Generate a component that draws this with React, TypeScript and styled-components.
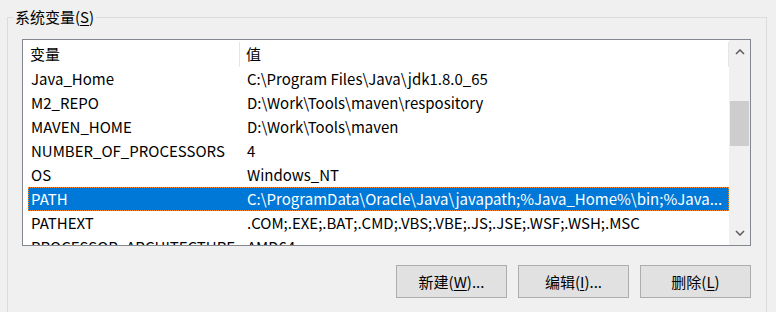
import styled, { createGlobalStyle } from "styled-components";

const GlobalStyle = createGlobalStyle`
  html, body {
    margin: 0;
    padding: 0;
    background: #f0f0f0;
  }
  body {
    font-family: "Noto Sans CJK SC", "Noto Sans", sans-serif;
    font-size: 15px;
    color: #000;
  }
`;

interface EnvVar {
  name: string;
  value: string;
}

const vars: EnvVar[] = [
  { name: "Java_Home", value: "C:\\Program Files\\Java\\jdk1.8.0_65" },
  { name: "M2_REPO", value: "D:\\Work\\Tools\\maven\\respository" },
  { name: "MAVEN_HOME", value: "D:\\Work\\Tools\\maven" },
  { name: "NUMBER_OF_PROCESSORS", value: "4" },
  { name: "OS", value: "Windows_NT" },
  {
    name: "PATH",
    value: "C:\\ProgramData\\Oracle\\Java\\javapath;%Java_Home%\\bin;%Java...",
  },
  { name: "PATHEXT", value: ".COM;.EXE;.BAT;.CMD;.VBS;.VBE;.JS;.JSE;.WSF;.WSH;.MSC" },
  { name: "PROCESSOR_ARCHITECTURE", value: "AMD64" },
];

const selectedName = "PATH";

const Chevron = ({ down }: { down?: boolean }) => (
  <svg width="10" height="6" viewBox="0 0 10 6">
    <path
      d={down ? "M1 1 L5 5 L9 1" : "M1 5 L5 1 L9 5"}
      fill="none"
      stroke="#606060"
      strokeWidth="1.6"
    />
  </svg>
);

const App = () => {
  return (
    <>
      <GlobalStyle />
      <GroupBox>
        <Legend>
          系统变量(<u>S</u>)
        </Legend>
        <ListBox>
          <ListArea>
            <Header>
              <HeaderCell $width={217}>变量</HeaderCell>
              <HeaderCell>值</HeaderCell>
            </Header>
            <Rows>
              {vars.map((v) => (
                <Row key={v.name} $selected={v.name === selectedName}>
                  <Cell>{v.name}</Cell>
                  <Cell>{v.value}</Cell>
                </Row>
              ))}
            </Rows>
          </ListArea>
          <ScrollBar>
            <ArrowButton>
              <Chevron />
            </ArrowButton>
            <Track>
              <Thumb $top={37} $height={45} />
            </Track>
            <ArrowButton>
              <Chevron down />
            </ArrowButton>
          </ScrollBar>
        </ListBox>
        <ButtonRow>
          <Button>
            新建(<u>W</u>)...
          </Button>
          <Button>
            编辑(<u>I</u>)...
          </Button>
          <Button>
            删除(<u>L</u>)
          </Button>
        </ButtonRow>
      </GroupBox>
    </>
  );
};
export default App;

const GroupBox = styled.fieldset`
  margin: 7px 9px 0 7px;
  padding: 0 15px 40px 14px;
  border: 1px solid #dcdcdc;
  min-width: 0;
`;

const Legend = styled.legend`
  margin-left: -9px;
  padding: 0 2px;
  line-height: 20px;
  font-size: 15px;
  u {
    text-underline-offset: 2px;
  }
`;

const ListBox = styled.div`
  margin-top: 12px;
  height: 205px;
  display: flex;
  border: 1px solid #828790;
  background: #fff;
`;

const ListArea = styled.div`
  flex: 1;
  min-width: 0;
  overflow: hidden;
`;

const Header = styled.div`
  display: flex;
  height: 27px;
  padding-top: 2px;
  box-sizing: border-box;
`;

const HeaderCell = styled.div<{ $width?: number }>`
  ${({ $width }) => ($width ? `width: ${$width}px;` : "flex: 1;")}
  box-sizing: border-box;
  padding-left: 7px;
  border-right: 1px solid #e5e5e5;
  line-height: 24px;
  white-space: nowrap;
  &:last-child {
    padding-left: 6px;
  }
`;

const Rows = styled.div`
  padding-left: 5px;
`;

const Row = styled.div<{ $selected?: boolean }>`
  display: grid;
  grid-template-columns: 216px 1fr;
  height: 24px;
  line-height: 24px;
  background: ${({ $selected }) => ($selected ? "#0078d7" : "transparent")};
  color: ${({ $selected }) => ($selected ? "#fff" : "#000")};
  outline: ${({ $selected }) => ($selected ? "1px dotted #ff8728" : "none")};
  outline-offset: -1px;
`;

const Cell = styled.div`
  padding-left: 3px;
  white-space: nowrap;
  overflow: hidden;
`;

const ScrollBar = styled.div`
  width: 21px;
  display: flex;
  flex-direction: column;
  background: #f0f0f0;
`;

const ArrowButton = styled.div`
  height: 24px;
  display: flex;
  align-items: center;
  justify-content: center;
`;

const Track = styled.div`
  flex: 1;
  padding: 0 1px;
`;

const Thumb = styled.div<{ $top: number; $height: number }>`
  margin-top: ${({ $top }) => $top}px;
  height: ${({ $height }) => $height}px;
  background: #cdcdcd;
`;

const ButtonRow = styled.div`
  margin-top: 19px;
  display: flex;
  justify-content: flex-end;
  gap: 11px;
`;

const Button = styled.div`
  width: 111px;
  height: 33px;
  box-sizing: border-box;
  border: 1px solid #adadad;
  background: #e1e1e1;
  display: flex;
  align-items: center;
  justify-content: center;
  font-size: 15px;
  u {
    text-underline-offset: 2px;
  }
`;
